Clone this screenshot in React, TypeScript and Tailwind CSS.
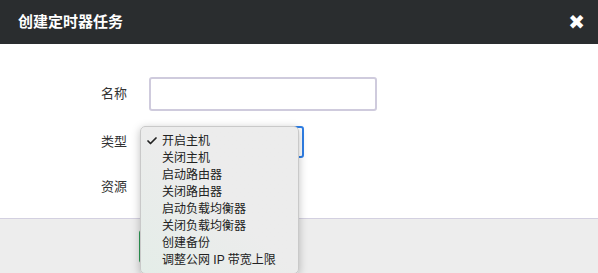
import { Check } from 'lucide-react';

const options = [
  '开启主机',
  '关闭主机',
  '启动路由器',
  '关闭路由器',
  '启动负载均衡器',
  '关闭负载均衡器',
  '创建备份',
  '调整公网 IP 带宽上限',
];

const font = "font-['Liberation_Sans','Noto_Sans_CJK_SC',sans-serif]";

export default function App() {
  return (
    <div className={`h-[273px] w-[598px] overflow-hidden bg-white ${font}`}>
      <div className="flex h-[44px] items-center justify-between bg-[#2a2d2f] pl-[18px] pr-[13px]">
        <h1 className="text-[15px] font-bold text-white">创建定时器任务</h1>
        <span className="font-['DejaVu_Sans',sans-serif] text-[20px] font-bold leading-none text-white">✖</span>
      </div>

      <div className="relative h-[174px]">
        <div className="flex flex-col pt-[33px]">
          <div className="flex items-center">
            <label className="w-[149px] pr-[22px] text-right text-[13px] text-[#333]">名称</label>
            <input className="h-[34px] w-[228px] rounded-[3px] border-2 border-[#cfcbdd] bg-white outline-none" />
          </div>
          <div className="mt-[15px] flex items-center">
            <label className="w-[149px] pr-[22px] text-right text-[13px] text-[#333]">类型</label>
            <div className="h-[32px] w-[155px] rounded-[3px] border-2 border-[#2f7fe6] bg-white" />
          </div>
          <div className="mt-[19px] flex items-center">
            <label className="w-[149px] pr-[22px] text-right text-[13px] text-[#333]">资源</label>
          </div>
        </div>

        <div className="absolute left-[140px] top-[82px] z-10 w-[159px] rounded-[5px] border border-[#c9c9c9] bg-gradient-to-tr from-[#e4ede8] via-[#ececec] to-[#ececec] py-[5px] shadow-[0_2px_8px_rgba(0,0,0,0.25)]">
          {options.map((o, i) => (
            <div key={o} className="flex h-[17px] items-center text-[12px] leading-none text-[#222]">
              <span className="flex w-[21px] justify-end pr-[4px]">
                {i === 0 && <Check size={12} strokeWidth={3.5} />}
              </span>
              <span>{o}</span>
            </div>
          ))}
        </div>
      </div>

      <div className="flex h-[55px] items-start border-t border-[#d3d0e0] bg-[#ededed] pl-[139px] pt-[11px]">
        <div className="h-[33px] w-[80px] rounded-[3px] bg-[#2e9a55]" />
      </div>
    </div>
  );
}
